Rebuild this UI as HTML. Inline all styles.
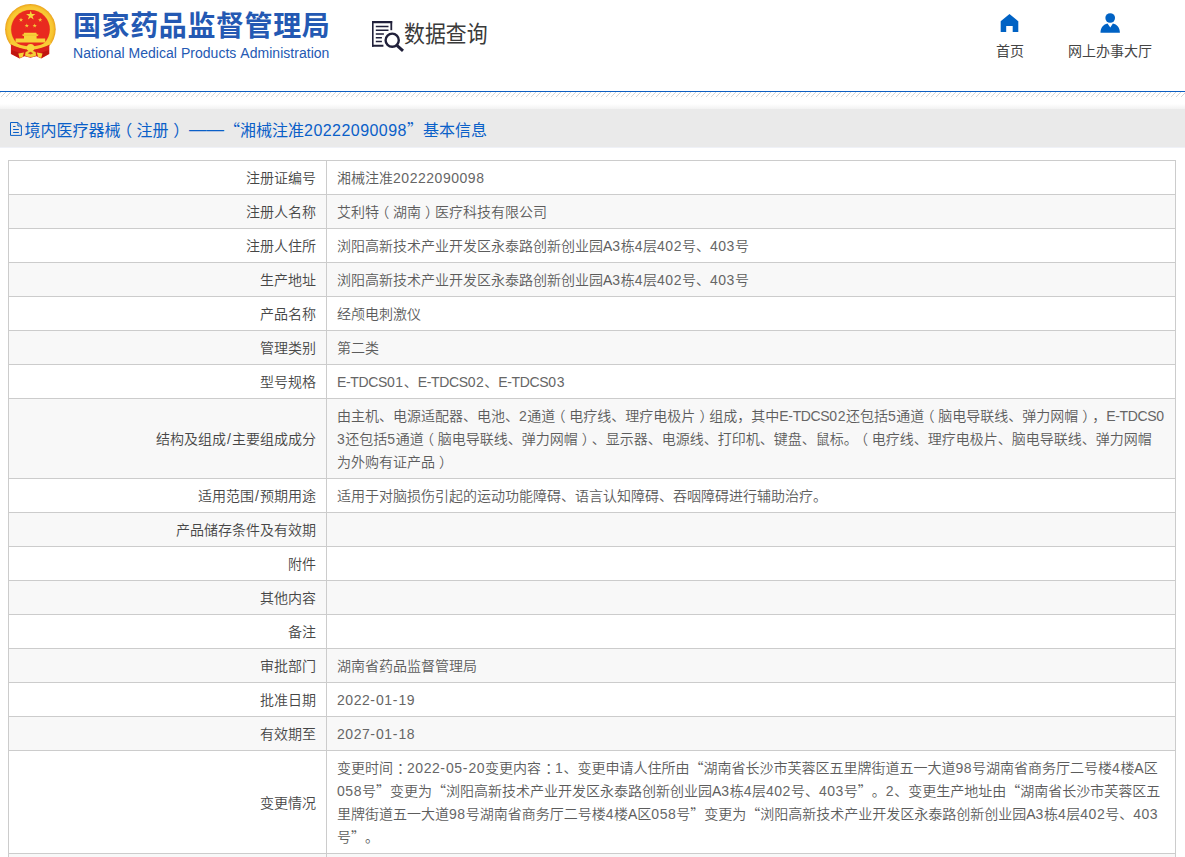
<!DOCTYPE html>
<html lang="zh-CN">
<head>
<meta charset="utf-8">
<title>境内医疗器械（注册）</title>
<style>
html,body{margin:0;padding:0;}
body{width:1185px;height:857px;overflow:hidden;background:#fff;position:relative;
 font-family:"Liberation Sans","Noto Sans CJK SC",sans-serif;font-size:14px;color:#333;text-spacing-trim:space-all;font-kerning:none;}
.cjk{font-family:"Liberation Sans","Noto Sans CJK SC",sans-serif;}
#hdr{position:absolute;left:0;top:0;width:1185px;height:91px;background:#fff;}
#emblem{position:absolute;left:0;top:0;width:62px;height:62px;}
#t1{position:absolute;left:73px;top:7px;height:40px;line-height:40px;font-size:28px;font-weight:bold;color:#2459b3;white-space:nowrap;letter-spacing:0.6px;}
#t2{position:absolute;left:73px;top:44px;height:18px;line-height:18px;font-size:14px;color:#2459b3;white-space:nowrap;letter-spacing:0.03px;}
#sicon{position:absolute;left:368px;top:17px;width:40px;height:38px;}
#stext{position:absolute;left:404px;top:16.5px;height:34px;line-height:34px;font-size:23px;color:#3a3a3a;white-space:nowrap;transform-origin:0 50%;transform:scaleX(0.908);}
.nav{position:absolute;top:0;left:0;text-align:center;font-size:14px;color:#444;white-space:nowrap;}
.nav svg{position:absolute;}
.nav span{position:absolute;top:41px;height:20px;line-height:20px;}
#blueline{position:absolute;left:0;top:91px;width:1185px;height:1px;background:#0d5fc2;}
#hatch{position:absolute;left:0;top:92px;width:1185px;height:5px;}
#shadow{position:absolute;left:0;top:104px;width:1185px;height:5px;background:linear-gradient(#fff,#f2f2f2);}
#bar{position:absolute;left:0;top:109px;width:1185px;height:38px;background:#eaeaea;border-bottom:1px solid #eff1f7;}
#bar svg{position:absolute;left:8px;top:11px;width:16px;height:18px;}
#bar .tt{position:absolute;left:24.5px;top:10px;height:24px;line-height:24px;font-size:16px;color:#0a60c8;white-space:nowrap;}
.d{letter-spacing:0.53px;}
.h{letter-spacing:1.1px;}
.sl{padding:0 1.05px;}
td .d,td .e{color:#666;}
.pl{position:relative;left:-0.27em;}
.pr{position:relative;left:0.29em;}
.co{position:relative;left:0.29em;}
.e{letter-spacing:-0.35px;}
.q{font-family:"Noto Sans CJK SC",sans-serif;line-height:0;}
.tt .d{letter-spacing:0.45px;}
.ds{font-size:17.5px;line-height:0;position:relative;top:-1px;}
table{position:absolute;left:8px;top:160px;width:1168px;border-collapse:collapse;table-layout:fixed;}
td{font-weight:350;border:1px solid #ccc;padding:6px 10px 4px;line-height:23px;height:23px;font-size:14px;vertical-align:middle;white-space:nowrap;overflow:hidden;}
td.k{width:297px;text-align:right;color:#464646;}
td.v{color:#5c5c5c;text-align:left;}
tr:nth-child(even) td{background:#f8f8f8;}
#rb{position:absolute;left:1175px;top:160px;width:1px;height:697px;background:#ccc;}
</style>
</head>
<body>
<div id="hdr">
<svg id="emblem" viewBox="0 0 62 62">
<defs>
<radialGradient id="gold" cx="50%" cy="50%" r="50%">
<stop offset="0.74" stop-color="#eea820"/><stop offset="0.8" stop-color="#f9cb36"/><stop offset="0.9" stop-color="#f7c430"/><stop offset="0.97" stop-color="#efad22"/><stop offset="1" stop-color="#e59a18"/>
</radialGradient>
</defs>
<circle cx="30.4" cy="29.3" r="25.3" fill="url(#gold)"/>
<circle cx="30.5" cy="29.4" r="19.3" fill="#e92a1f"/>
<path d="M10.9 43.6 Q30.5 54.6 49.3 43.6 L49.3 54 L41.2 58.6 L36.5 56.2 L30.4 57.8 L24.5 56.2 L19.6 58.6 L10.9 54 Z" fill="#d8201a"/>
<path d="M11.4 50 L11.4 53.7 L19.4 57.9 L21.5 53.5 Z M48.8 50 L48.8 53.7 L41.4 57.9 L39.3 53.5 Z" fill="#bf1510"/>
<path d="M10.6 42.4 Q30.5 53.6 50.4 42.4" fill="none" stroke="#f8cc36" stroke-width="3.3"/>
<path d="M18.3 53.4 L24 52.4 L22.6 57 L19.6 58 Z M42.5 53.4 L36.8 52.4 L38.2 57 L41.2 58 Z" fill="#f7d43a"/>
<circle cx="30.6" cy="47.7" r="3.8" fill="#f8d83e"/>
<path d="M25.6 52 Q30.5 49.6 35.6 52 L36.2 55.4 Q30.5 58.6 25 55.4 Z" fill="#f4cf38"/>
<path d="M27.8 53.2 L30.5 51.8 L33.2 53.2 L30.5 54.6 Z" fill="#dc3a1e"/>
<polygon points="30.75,10.70 31.85,14.09 35.41,14.09 32.53,16.18 33.63,19.56 30.75,17.47 27.87,19.56 28.97,16.18 26.09,14.09 29.65,14.09" fill="#f6d83c"/>
<polygon points="21.00,17.60 21.52,19.19 23.19,19.19 21.84,20.17 22.35,21.76 21.00,20.78 19.65,21.76 20.16,20.17 18.81,19.19 20.48,19.19" fill="#f3cf3a"/>
<polygon points="40.20,17.60 40.72,19.19 42.39,19.19 41.04,20.17 41.55,21.76 40.20,20.78 38.85,21.76 39.36,20.17 38.01,19.19 39.68,19.19" fill="#f3cf3a"/>
<polygon points="26.80,23.40 27.32,24.99 28.99,24.99 27.64,25.97 28.15,27.56 26.80,26.58 25.45,27.56 25.96,25.97 24.61,24.99 26.28,24.99" fill="#f3cf3a"/>
<polygon points="34.70,23.40 35.22,24.99 36.89,24.99 35.54,25.97 36.05,27.56 34.70,26.58 33.35,27.56 33.86,25.97 32.51,24.99 34.18,24.99" fill="#f3cf3a"/>
<path d="M24 32.8 H36.3 L36.9 34.4 H38.6 L37.6 36 H36.6 V38.6 H45.2 V42.6 H15.6 V38.6 H24 V36 H23 L22 34.4 H23.5 Z" fill="#f8d23a"/>
<path d="M22.6 35.2 H38.2" stroke="#f0b92c" stroke-width="0.7"/>
</svg>
<div id="t1" class="cjk">国家药品监督管理局</div>
<div id="t2">National Medical Products Administration</div>
<svg id="sicon" viewBox="368 17 40 38">
<g fill="none" stroke="#20203a">
<path d="M372 22.15 H392.2 M372 45.75 H383.4" stroke-width="2.1"/><path d="M372.8 21.1 V46.8" stroke-width="1.6"/><path d="M391.3 21.1 V30.2" stroke-width="1.8"/>
<path d="M375.8 26.6 H388.5 M375.8 30.3 H388.5 M375.8 34 H383.9 M375.8 37.8 H381.9 M375.8 41.4 H381.9" stroke-width="1.5"/>
<circle cx="392.2" cy="40.2" r="6.6" stroke-width="2.4" fill="#fff"/>
<path d="M396.9 45.3 L403 50.8" stroke-width="3"/>
</g></svg>
<div id="stext" class="cjk">数据查询</div>
<div class="nav" id="n1"><svg viewBox="995 10 30 26" style="left:995px;top:10px;width:30px;height:26px;"><path d="M1009.5 14 L1018.3 21.3 V32 H1012.7 V26 H1006.2 V32 H1000.7 V21.3 Z" fill="#0062c4"/></svg><span class="cjk" style="left:996px;">首页</span></div>
<div class="nav" id="n2"><svg viewBox="1095 10 30 26" style="left:1095px;top:10px;width:30px;height:26px;"><circle cx="1110.2" cy="18" r="4.85" fill="#0062c4"/><path d="M1100.5 32.85 C1100.5 27.5 1103.5 24.2 1107.5 23.4 L1110.3 27.4 L1112.9 23.4 C1117 24.2 1119.9 27.5 1119.9 32.85 Z" fill="#0062c4"/></svg><span class="cjk" style="left:1068px;">网上办事大厅</span></div>
</div>
<div id="blueline"></div>
<svg id="hatch" width="1185" height="5" shape-rendering="crispEdges"><defs><pattern id="hp" width="5" height="5" patternUnits="userSpaceOnUse"><rect x="0" y="0" width="1" height="1" fill="#d6d6d6"/><rect x="4" y="1" width="1" height="1" fill="#d6d6d6"/><rect x="3" y="2" width="1" height="1" fill="#d6d6d6"/><rect x="2" y="3" width="1" height="1" fill="#d6d6d6"/><rect x="1" y="4" width="1" height="1" fill="#d6d6d6"/></pattern></defs><rect width="1185" height="5" fill="url(#hp)"/></svg>
<div id="shadow"></div>
<div id="bar">
<svg viewBox="8 120 16 18"><g fill="none" stroke="#0a60c8" stroke-width="1"><path d="M17.9 122.5 H10.5 V135.4 H21.4 V126 Z"/><path d="M17.9 122.5 V126 H21.4"/><path d="M13.1 126.5 H15.5 M13.1 129.5 H18.9 M13.1 132.5 H18.9"/></g></svg>
<div class="tt">境内医疗器械<span class="pl">（</span>注册<span class="pr">）</span> <span class="ds">——</span><span class="q">“</span>湘械注准<span class="d">20222090098</span><span class="q">”</span>基本信息</div>
</div>
<table>
<tr><td class="k">注册证编号</td><td class="v">湘械注准<span class="d">20222090098</span></td></tr>
<tr><td class="k">注册人名称</td><td class="v">艾利特<span class="pl">（</span>湖南<span class="pr">）</span>医疗科技有限公司</td></tr>
<tr><td class="k">注册人住所</td><td class="v">浏阳高新技术产业开发区永泰路创新创业园A<span class="d">3</span>栋<span class="d">4</span>层<span class="d">402</span>号、<span class="d">403</span>号</td></tr>
<tr><td class="k">生产地址</td><td class="v">浏阳高新技术产业开发区永泰路创新创业园A<span class="d">3</span>栋<span class="d">4</span>层<span class="d">402</span>号、<span class="d">403</span>号</td></tr>
<tr><td class="k">产品名称</td><td class="v">经颅电刺激仪</td></tr>
<tr><td class="k">管理类别</td><td class="v">第二类</td></tr>
<tr><td class="k">型号规格</td><td class="v"><span class="e">E-TDCS</span><span class="d">01</span>、<span class="e">E-TDCS</span><span class="d">02</span>、<span class="e">E-TDCS</span><span class="d">03</span></td></tr>
<tr><td class="k">结构及组成<span class="sl">/</span>主要组成成分</td><td class="v">由主机、电源适配器、电池、<span class="d">2</span>通道<span class="pl">（</span>电疗线、理疗电极片<span class="pr">）</span>组成，其中<span class="e">E-TDCS</span><span class="d">02</span>还包括<span class="d">5</span>通道<span class="pl">（</span>脑电导联线、弹力网帽<span class="pr">）</span>，<span class="e">E-TDCS</span><span class="d">0</span><br><span class="d">3</span>还包括<span class="d">5</span>通道<span class="pl">（</span>脑电导联线、弹力网帽<span class="pr">）</span>、显示器、电源线、打印机、键盘、鼠标。<span class="pl">（</span>电疗线、理疗电极片、脑电导联线、弹力网帽<br>为外购有证产品<span class="pr">）</span></td></tr>
<tr><td class="k">适用范围<span class="sl">/</span>预期用途</td><td class="v">适用于对脑损伤引起的运动功能障碍、语言认知障碍、吞咽障碍进行辅助治疗。</td></tr>
<tr><td class="k">产品储存条件及有效期</td><td class="v"></td></tr>
<tr><td class="k">附件</td><td class="v"></td></tr>
<tr><td class="k">其他内容</td><td class="v"></td></tr>
<tr><td class="k">备注</td><td class="v"></td></tr>
<tr><td class="k">审批部门</td><td class="v">湖南省药品监督管理局</td></tr>
<tr><td class="k">批准日期</td><td class="v"><span class="d">2022<span class="h">-</span>01<span class="h">-</span>19</span></td></tr>
<tr><td class="k">有效期至</td><td class="v"><span class="d">2027<span class="h">-</span>01<span class="h">-</span>18</span></td></tr>
<tr><td class="k">变更情况</td><td class="v">变更时间<span class="co">：</span><span class="d">2022<span class="h">-</span>05<span class="h">-</span>20</span>变更内容<span class="co">：</span><span class="d">1</span>、变更申请人住所由<span class="q">“</span>湖南省长沙市芙蓉区五里牌街道五一大道<span class="d">98</span>号湖南省商务厅二号楼<span class="d">4</span>楼A区<br><span class="d">058</span>号<span class="q">”</span>变更为<span class="q">“</span>浏阳高新技术产业开发区永泰路创新创业园A<span class="d">3</span>栋<span class="d">4</span>层<span class="d">402</span>号、<span class="d">403</span>号<span class="q">”</span>。<span class="d">2</span>、变更生产地址由<span class="q">“</span>湖南省长沙市芙蓉区五<br>里牌街道五一大道<span class="d">98</span>号湖南省商务厅二号楼<span class="d">4</span>楼A区<span class="d">058</span>号<span class="q">”</span>变更为<span class="q">“</span>浏阳高新技术产业开发区永泰路创新创业园A<span class="d">3</span>栋<span class="d">4</span>层<span class="d">402</span>号、<span class="d">403</span><br>号<span class="q">”</span>。</td></tr>
<tr><td class="k">&nbsp;</td><td class="v"></td></tr>
</table>
</body>
</html>
